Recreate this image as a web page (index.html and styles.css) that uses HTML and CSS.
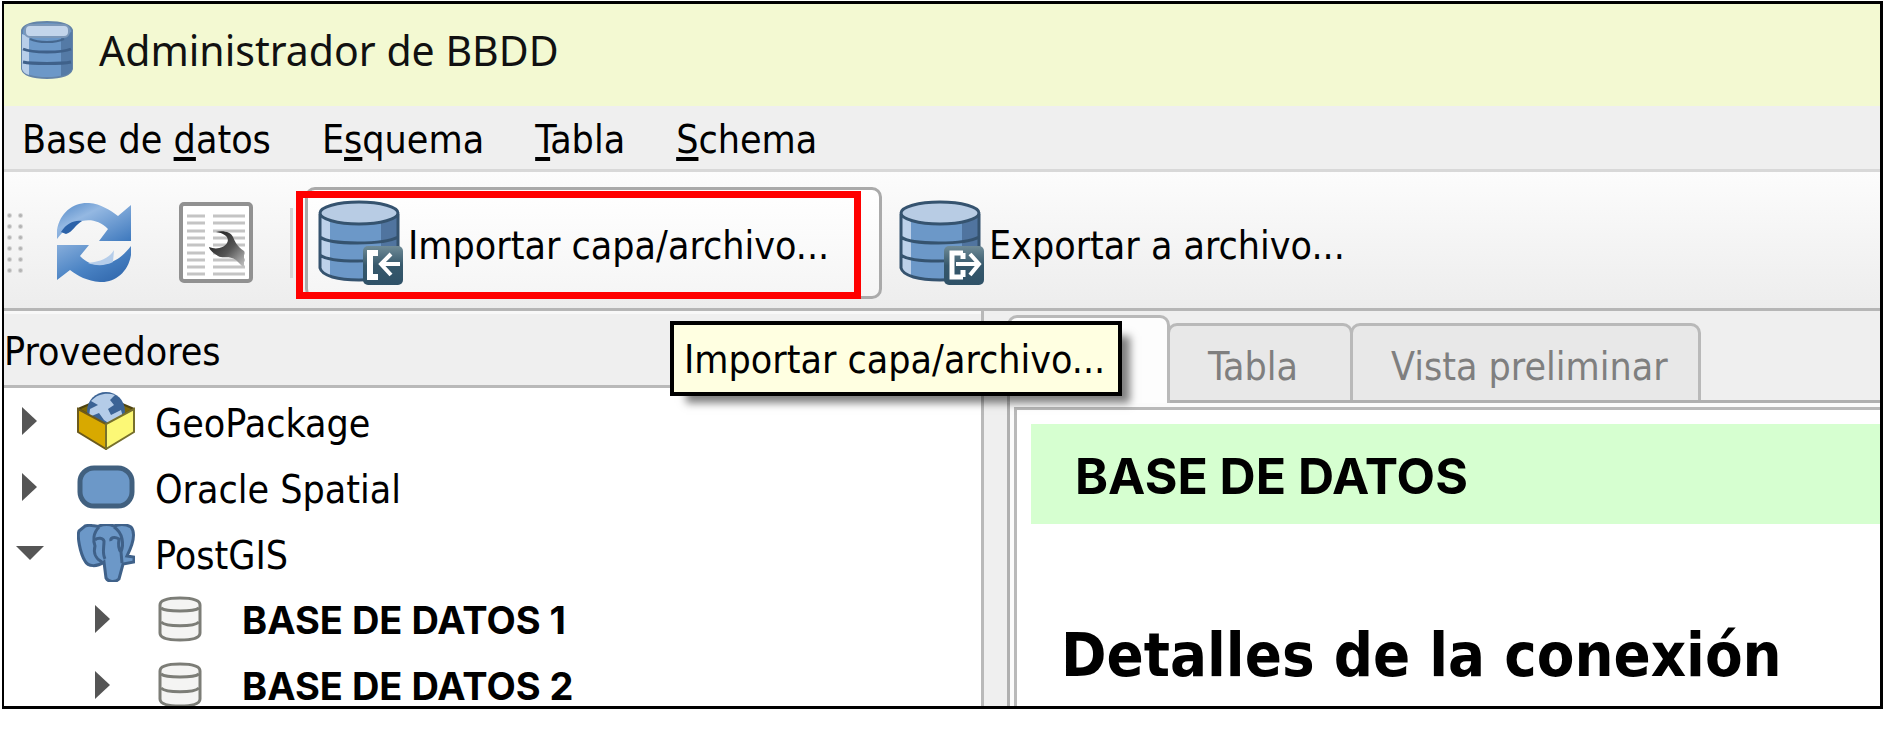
FILE: index.html
```html
<!DOCTYPE html>
<html lang="es">
<head>
<meta charset="utf-8">
<title>Administrador de BBDD</title>
<link rel="stylesheet" href="styles.css">
</head>
<body>
<svg class="defs" width="0" height="0" aria-hidden="true">
  <defs>
    <linearGradient id="blueUp" x1="0" y1="0" x2="1" y2="1"><stop offset="0" stop-color="#4f86c6"/><stop offset=".35" stop-color="#94b8e2"/><stop offset="1" stop-color="#3d78bd"/></linearGradient>
    <linearGradient id="blueDown" x1="0" y1="0" x2="1" y2="1"><stop offset="0" stop-color="#86addb"/><stop offset=".5" stop-color="#4a83c4"/><stop offset="1" stop-color="#2c62a8"/></linearGradient>
    <linearGradient id="wrench" x1="0" y1="0" x2="1" y2="1"><stop offset="0" stop-color="#111"/><stop offset=".55" stop-color="#555"/><stop offset="1" stop-color="#c8c8c8"/></linearGradient>
    <linearGradient id="badge" x1="0" y1="0" x2="0" y2="1"><stop offset="0" stop-color="#6f8b97"/><stop offset=".5" stop-color="#36586b"/><stop offset="1" stop-color="#2f5167"/></linearGradient>
    <symbol id="db" viewBox="0 0 84 84">
      <path d="M2 14V68C4 76 20 80 41 80S78 76 80 68V14Z" fill="#6c98c8"/>
      <path d="M2 14V68C3 72 7 75 12 77V22Z" fill="#bdd1ea"/>
      <path d="M63 23V78C73 76 79 72 80 68V14Z" fill="#50749f"/>
      <path d="M2 14V68C4 76 20 80 41 80S78 76 80 68V14M2 37C12 45 66 45 80 37M2 55C12 63 66 63 80 55" fill="none" stroke="#35536f" stroke-width="3"/>
      <ellipse cx="41" cy="13" rx="39" ry="11" fill="#b8cce4" stroke="#35536f" stroke-width="3"/>
    </symbol>
    <symbol id="dbgrey" viewBox="0 0 44 46">
      <path d="M2 9C2 4 10 2 22 2S42 4 42 9V37C42 42 34 44 22 44S2 42 2 37Z" fill="#f4f4f3" stroke="#7c7d77" stroke-width="3"/>
      <path d="M3 12C8 16 36 16 41 12M3 26C8 31 36 31 41 26" fill="none" stroke="#7c7d77" stroke-width="3"/>
    </symbol>
  </defs>
</svg>
<div class="window">
  <header class="titlebar">
    <svg class="app-icon" viewBox="0 0 54 58" aria-hidden="true">
      <path d="M2 9C4 3 14 1 27 1S50 3 52 9V48C50 55 40 57 27 57S4 55 2 48Z" fill="#6c98c8" stroke="#6484a8" stroke-width="2"/>
      <path d="M2 13V48C3 51 5 53 9 54V16Z" fill="#b7cee9"/>
      <path d="M41 14V55C48 54 51 51 52 48V11Z" fill="#547aa6"/>
      <path d="M3 28C12 32 42 32 51 28M3 41C12 43 42 43 51 41" fill="none" stroke="#3f618a" stroke-width="3"/>
      <rect x="5" y="4" width="44" height="12" rx="5" fill="#c3d5eb" stroke="#7c98b9" stroke-width="2"/>
      <path d="M10 18C18 22 36 22 44 18" fill="none" stroke="#45678f" stroke-width="2"/>
    </svg>
    <h1 class="title">Administrador de BBDD</h1>
  </header>
  <nav class="menubar">
    <button type="button">Base de <u>d</u>atos</button>
    <button type="button">E<u>s</u>quema</button>
    <button type="button"><u>T</u>abla</button>
    <button type="button"><u>S</u>chema</button>
  </nav>
  <div class="toolbar">
    <span class="grip"></span>
    <button type="button" class="tool refresh" aria-label="Actualizar">
      <svg width="76" height="84" viewBox="0 0 76 84">
        <path d="M1 38V29C4 11 18 1 33 2C45 3 54 9 62 15L75 4V40H43L52 28C44 20 35 18 26 20C15 23 8 29 1 38Z" fill="url(#blueUp)"/>
        <path d="M5 31C11 22 18 19 26 20C19 24 17 31 10 33Z" fill="#2c62a8"/>
        <path d="M75 45V54C72 72 58 82 44 81C31 80 22 75 14 69L1 79V44H33L24 55C32 63 40 65 49 63C60 61 68 54 75 45Z" fill="url(#blueDown)"/>
        <path d="M58 49L57 61C49 65 40 65 32 62C42 61 53 58 58 49Z" fill="#b5cdea"/>
      </svg>
    </button>
    <button type="button" class="tool sql" aria-label="Ventana SQL">
      <svg width="74" height="82" viewBox="0 0 74 82">
        <rect x="2" y="2" width="70" height="77" rx="3" fill="#fff" stroke="#919191" stroke-width="4"/>
        <path d="M8 14H26M8 21H26M8 29H26M8 36H26M8 43H26M8 51H26M8 58H26M8 65H26M8 72H26M34 14H66M34 21H66M34 29H66M34 36H66M34 43H66M34 51H66M34 58H66M34 65H66M34 72H66" stroke="#c4c4c4" stroke-width="3"/>
        <path d="M37 30C44 28 52 30 54 35C56 40 58 44 65 49V66L57 58C50 53 44 57 39 54C35 51 31 49 30 45C37 48 45 46 48 41C51 36 46 31 37 30Z" fill="url(#wrench)"/>
      </svg>
    </button>
    <span class="separator"></span>
    <button type="button" class="tool action active" aria-describedby="tip">
      <svg width="86" height="86" viewBox="0 0 86 86">
        <use href="#db" width="84" height="84"/>
        <rect x="45" y="46" width="40" height="39" rx="5" fill="url(#badge)"/>
        <path d="M60 53H52V77H60" fill="none" stroke="#fff" stroke-width="6"/>
        <path d="M82 64H64M73 54L63 64L73 75" fill="none" stroke="#fff" stroke-width="4"/>
      </svg>
      <span>Importar capa/archivo...</span>
    </button>
    <button type="button" class="tool action">
      <svg width="86" height="86" viewBox="0 0 86 86">
        <use href="#db" width="84" height="84"/>
        <rect x="45" y="46" width="40" height="39" rx="5" fill="url(#badge)"/>
        <path d="M64 53H53V77H64M64 53V59M64 77V70" fill="none" stroke="#fff" stroke-width="5"/>
        <path d="M57 64H80M71 54L80 64L71 75" fill="none" stroke="#fff" stroke-width="4"/>
      </svg>
      <span>Exportar a archivo...</span>
    </button>
    <div class="tooltip" id="tip" role="tooltip">Importar capa/archivo...</div>
  </div>
  <main class="panes">
    <section class="providers">
      <h2 class="dock-title">Proveedores</h2>
      <ul class="tree">
        <li>
          <svg class="arrow" viewBox="0 0 28 28"><path d="M6 0L21 14L6 28Z"/></svg>
          <svg class="icon" viewBox="0 0 58 58">
            <path d="M1 17L29 5L57 17L29 32Z" fill="#7c6708" stroke="#4d4210" stroke-width="2"/>
            <circle cx="29" cy="19" r="19" fill="#3b6395"/>
            <path d="M14 9C20 2 30 0 38 3L33 8L37 13L31 17L34 23L44 18L46 25L36 34L27 28L22 21L12 25L13 17L21 13Z" fill="#b4cce8"/>
            <path d="M1 17L29 32V57L1 40Z" fill="#d8a900" stroke="#6b5a1c" stroke-width="2"/>
            <path d="M57 17L29 32V57L57 40Z" fill="#fcf876" stroke="#77702c" stroke-width="2"/>
          </svg>
          <span>GeoPackage</span>
        </li>
        <li>
          <svg class="arrow" viewBox="0 0 28 28"><path d="M6 0L21 14L6 28Z"/></svg>
          <svg class="icon" viewBox="0 0 58 58"><rect x="3" y="10" width="52" height="38" rx="14" fill="#6c98c8" stroke="#41607f" stroke-width="5"/></svg>
          <span>Oracle Spatial</span>
        </li>
        <li>
          <svg class="arrow" viewBox="0 0 28 28"><path d="M0 7H28L14 21Z"/></svg>
          <svg class="icon" viewBox="0 0 58 58">
            <path d="M8 2C14 0 18 3 22 2C27 0 32 0 37 2C42 0 49 0 54 3C59 9 56 20 50 32L57 33V38L46 40L42 55C38 59 31 58 29 54L27 38C20 43 11 43 8 37C3 29 0 12 2 7Z" fill="#6c98c8" stroke="#3f6189" stroke-width="3"/>
            <path d="M22 3C16 9 16 17 18 22C16 29 19 35 25 38M18 16C21 13 26 14 27 17C27 24 25 29 28 35M37 3C46 9 47 20 44 28C41 25 41 21 42 15C37 12 33 14 34 17M44 28L45 39" fill="none" stroke="#3f6189" stroke-width="3"/>
          </svg>
          <span>PostGIS</span>
        </li>
        <li class="child">
          <svg class="arrow" viewBox="0 0 28 28"><path d="M6 0L21 14L6 28Z"/></svg>
          <svg class="icon-db"><use href="#dbgrey"/></svg>
          <strong>BASE DE DATOS 1</strong>
        </li>
        <li class="child">
          <svg class="arrow" viewBox="0 0 28 28"><path d="M6 0L21 14L6 28Z"/></svg>
          <svg class="icon-db"><use href="#dbgrey"/></svg>
          <strong>BASE DE DATOS 2</strong>
        </li>
      </ul>
    </section>
    <section class="details">
      <div class="tabs" role="tablist">
        <button type="button" role="tab" class="tab selected" aria-selected="true" aria-label="Información"></button>
        <button type="button" role="tab" class="tab" disabled>Tabla</button>
        <button type="button" role="tab" class="tab wide" disabled>Vista preliminar</button>
      </div>
      <div class="tab-frame">
        <article class="info">
          <h2 class="banner">BASE DE DATOS</h2>
          <h3 class="subhead">Detalles de la conexión</h3>
        </article>
      </div>
    </section>
  </main>
</div>
</body>
</html>
```
FILE: styles.css
```css
* { box-sizing: border-box; }

body {
  margin: 0;
  height: 100vh;
  padding: 1px 1px 27px 2px;
  background: #fff;
  color: #000;
  font-family: "DejaVu Sans Condensed", "Noto Sans", sans-serif;
  font-size: 39px;
  line-height: 48px;
  overflow: hidden;
}

h1, h2, h3, ul { margin: 0; padding: 0; font-weight: 400; }
button { border: 0; padding: 0; background: none; color: inherit; font: inherit; }
svg { display: block; flex: none; }
.defs { position: absolute; }

.window {
  height: 100%;
  display: flex;
  flex-direction: column;
  border: 3px solid #000;
  border-left-width: 2px;
  background: #efefef;
  overflow: hidden;
}

.titlebar {
  display: flex;
  align-items: center;
  gap: 25px;
  height: 102px;
  flex: none;
  padding: 0 16px 10px;
  background: #f3f9d2;
}
.app-icon { width: 54px; height: 58px; }
.title {
  font-family: "Noto Sans", sans-serif;
  font-size: 41px;
  color: #111;
}

.menubar {
  display: flex;
  align-items: center;
  gap: 51px;
  height: 66px;
  flex: none;
  padding: 4px 18px 0;
  border-bottom: 3px solid #d8d8d8;
}
.menubar u {
  text-decoration-thickness: 4px;
  text-underline-offset: 4px;
  text-decoration-skip-ink: none;
}

.toolbar {
  position: relative;
  display: flex;
  align-items: center;
  height: 139px;
  flex: none;
  padding-top: 6px;
  background: linear-gradient(#fcfcfc, #ededed);
  border-bottom: 3px solid #b6b6b6;
}
.grip {
  width: 22px;
  height: 66px;
  background: radial-gradient(circle, #b4b4b4 1px, transparent 3px) 0 0 / 11px 11px;
}
.tool { display: flex; align-items: center; white-space: nowrap; }
.tool span { padding-top: 6px; }
.refresh { margin-left: 30px; }
.sql { margin-left: 47px; }
.separator { width: 3px; height: 70px; margin: 0 12px 0 37px; background: #d6d6d6; }
.action { position: relative; height: 112px; gap: 4px; padding: 0 16px 0 10px; border: 3px solid transparent; }
.active {
  width: 577px;
  margin-right: 4px;
  border: 3px solid #aaa;
  border-radius: 10px;
  background: linear-gradient(#fff, #f5f5f5);
}
.active::after {
  content: "";
  position: absolute;
  inset: 1px 18px -3px -12px;
  border: 7px solid #f00;
}
.tooltip {
  position: absolute;
  z-index: 2;
  left: 666px;
  top: 149px;
  padding: 11px 13px 8px 10px;
  border: 4px solid #000;
  background: #ffffe1;
  box-shadow: 12px 11px 8px -4px rgba(0, 0, 0, .5);
  white-space: nowrap;
}

.panes { flex: 1; min-height: 0; display: flex; }
.providers {
  flex: 0 0 980px;
  display: flex;
  flex-direction: column;
  border-right: 3px solid #b9b9b9;
  background: #fff;
}
.dock-title {
  height: 77px;
  flex: none;
  padding-top: 14px;
  font-size: 39px;
  background: #efefef;
  border-top: 3px solid #f8f8f8;
  border-bottom: 3px solid #b9b9b9;
}
.tree { list-style: none; }
.tree li { display: flex; align-items: center; height: 66px; padding-left: 12px; }
.tree .child { padding-left: 85px; }
.tree span { padding-top: 6px; }
.arrow { width: 28px; height: 28px; fill: #555; }
.icon { width: 58px; height: 58px; margin: 0 20px 0 33px; }
.icon-db { width: 44px; height: 46px; margin: 0 40px 0 41px; }
.tree strong { padding-top: 2px; font: 700 38px/38px Inter, sans-serif; }

.details { flex: 1; min-width: 0; display: flex; flex-direction: column; padding: 4px 0 0 23px; }
.tabs { display: flex; align-items: flex-end; height: 88px; }
.tab {
  height: 80px;
  padding: 8px 52px 0 38px;
  margin-left: -3px;
  border: 3px solid #b9b9b9;
  border-radius: 10px 10px 0 0;
  background: #e8e8e8;
  color: #7f7f7f;
}
.tab.wide { padding: 8px 30px 0 38px; }
.tab.selected {
  position: relative;
  width: 163px;
  height: 88px;
  margin-left: 0;
  border-bottom: 0;
  background: #fdfdfd;
}
.tab-frame {
  flex: 1;
  min-height: 0;
  margin-top: -3px;
  padding: 4px 0 0 4px;
  border: solid #b0b0b0;
  border-width: 3px 0 0 3px;
  background: #fbfbfb;
}
.info {
  height: 100%;
  padding: 14px 0 0 14px;
  border: solid #b9b9b9;
  border-width: 3px 0 0 3px;
  background: #fff;
}
.banner {
  padding: 22px 44px 18px;
  background: #d6ffd0;
  font: 700 50px/60px Inter, sans-serif;
}
.subhead {
  margin: 95px 0 0 30px;
  font-size: 61px;
  font-weight: 700;
  line-height: 72px;
}
```
